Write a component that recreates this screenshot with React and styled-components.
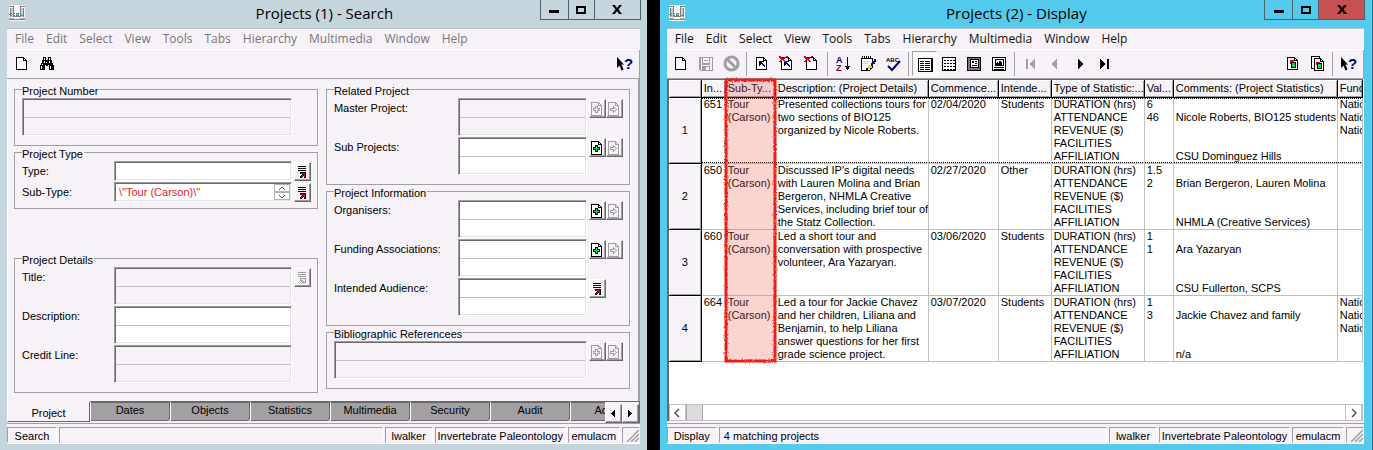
import React from 'react';
import styled, { createGlobalStyle, css } from 'styled-components';

const FACE = '#f7f2f7';
const LINE = '#a09fa1';
const DARK = '#696969';
const UI_FONT = '"Liberation Sans", Arial, sans-serif';
const CHROME_FONT = '"Open Sans", "Noto Sans", sans-serif';

const GlobalStyle = createGlobalStyle`
  * { box-sizing: border-box; }
  body { margin: 0; background: #000; }
  button, input, textarea { font: inherit; color: inherit; margin: 0; border-radius: 0; }
`;

/* ---------- window frame ---------- */

const Desktop = styled.div`
  display: flex;
  gap: 13px;
  min-height: 100vh;
  background: #000;
  color: #000;
  font: 11px/13px ${UI_FONT};
`;

const WindowFrame = styled.section`
  flex: ${p => p.$grow} 1 0;
  min-width: 0;
  display: flex;
  flex-direction: column;
  padding: 0 ${p => (p.$active ? 8 : 7)}px 6px 7px;
  background: ${p => (p.$active ? '#54cbec' : '#c5d5dc')};
  border-right: ${p => (p.$active ? '1px solid #2d6d80' : '0')};
`;

const TitleBar = styled.header`
  display: grid;
  grid-template-columns: 1fr auto 1fr;
  height: 28px;
  padding-left: 2px;
`;

const AppIcon = styled.span`
  padding-top: 5px;
  svg { display: block; }
`;

const Title = styled.h1`
  margin: 0;
  font: 400 15px/27px ${CHROME_FONT};
`;

const WindowButtons = styled.div`
  justify-self: end;
  display: flex;
  height: 20px;
  margin-right: -1px;
`;

const WindowButton = styled.button`
  display: flex;
  align-items: center;
  justify-content: center;
  width: ${p => p.$width}px;
  height: 20px;
  padding: 0;
  border: 1px solid #4e6068;
  border-top: 0;
  & + & { border-left: 0; }
  background: ${p => (p.$danger ? '#c75050' : 'transparent')};
`;

const Client = styled.div`
  flex: 1;
  display: flex;
  flex-direction: column;
  min-width: 0;
  background: ${FACE};
  border-top: 1px solid #b4c3cc;
`;

const MenuBar = styled.nav`
  display: flex;
  gap: 12px;
  height: 21px;
  padding-left: 8px;
  border-bottom: 1px solid #fff;
  font: 12px/20px ${CHROME_FONT};
`;

const MenuItem = styled.a`
  color: ${p => (p.$active ? '#111' : '#77747a')};
  text-decoration: none;
`;

const ToolBar = styled.div`
  display: flex;
  align-items: center;
  height: 29px;
  padding: 0 2px 1px;
  border-bottom: 1px solid ${LINE};
  border-right: 1px solid ${LINE};
`;

const ToolButton = styled.button`
  display: flex;
  align-items: center;
  justify-content: center;
  width: 25px;
  height: 25px;
  padding: 0;
  border: 1px solid transparent;
  background: none;
  ${p => p.$pressed && css`
    border-color: ${LINE} #fff #fff ${LINE};
    background: #fcfafc;
    padding: 2px 0 0 2px;
  `}
`;

const ToolSeparator = styled.span`
  width: 6px;
  height: 24px;
  background: linear-gradient(${LINE}, ${LINE}) 2px 0 / 1px 100% no-repeat;
`;

const Spacer = styled.span`
  flex: 1;
`;

/* ---------- form ---------- */

const FormBody = styled.main`
  flex: 1;
  display: flex;
  gap: 8px;
  padding: 4px 8px 8px 6px;
  border-left: 1px solid #fff;
  border-right: 2px solid ${LINE};
`;

const FormColumn = styled.div`
  flex: 1 1 0;
  min-width: 0;
  display: flex;
  flex-direction: column;
  justify-content: ${p => (p.$spread ? 'space-between' : 'flex-start')};
`;

const Group = styled.fieldset`
  min-width: 0;
  margin: 0;
  padding: 2px 6px ${p => (p.$tight ? 6 : 9)}px 7px;
  border: 1px solid ${LINE};
  box-shadow: 1px 0 #fff;
  display: grid;
  grid-template-columns: minmax(0, 1fr);
  row-gap: 1px;
`;

const Legend = styled.legend`
  height: 13px;
  padding: 2px 1px 0 0;
  line-height: 12px;
`;

const FieldRow = styled.div`
  display: flex;
  align-items: flex-start;
`;

const FieldLabel = styled.label`
  flex: none;
  width: ${p => p.$width}px;
  padding-top: 4px;
`;

const sunken = css`
  display: block;
  flex: 1;
  min-width: 0;
  padding: 3px 4px;
  border: 1px solid;
  border-color: ${LINE} #fff #fff ${LINE};
  box-shadow: inset 1px 1px ${DARK}, inset -1px -1px #e3e3e3;
  outline: 0;
  background-color: ${p => (p.disabled ? FACE : '#fff')};
`;

const LineInput = styled.input`
  ${sunken}
  height: 20px;
  color: #f0142c;
`;

const RuledText = styled.textarea`
  ${sunken}
  height: 38px;
  resize: none;
  overflow: hidden;
  line-height: 18px;
  background-image: linear-gradient(#c3c0c3, #c3c0c3);
  background-size: 100% 1px;
  background-position: 0 18px;
  background-repeat: no-repeat;
`;

const SpinnerWrap = styled.span`
  flex: 1;
  min-width: 0;
  display: grid;
  grid-template-columns: 1fr 16px 2px;
  align-items: center;
  > input { grid-area: 1 / 1 / 2 / 4; }
  > span { grid-area: 1 / 2 / 2 / 3; z-index: 1; }
`;

const Spinner = styled.span`
  display: grid;
  height: 16px;
`;

const SpinButton = styled.button`
  display: flex;
  align-items: center;
  justify-content: center;
  height: 8px;
  padding: 0;
  border: 1px solid #b5b3b5;
  background: #fff;
`;

const ButtonSlot = styled.span`
  flex: none;
  display: flex;
  width: ${p => p.$width}px;
  padding: 1px 0 0 2px;
`;

const RaisedButton = styled.button`
  display: flex;
  align-items: center;
  justify-content: center;
  width: 17px;
  height: 19px;
  padding: 0;
  border: 1px solid;
  border-color: #fff ${DARK} ${DARK} #fff;
  box-shadow: inset -1px -1px ${LINE};
  background: ${FACE};
`;

/* ---------- tabs ---------- */

const TabStrip = styled.div`
  display: flex;
  height: 22px;
  border-right: 1px solid ${DARK};
`;

const TabList = styled.div`
  flex: 1;
  min-width: 0;
  display: flex;
  overflow: hidden;
`;

const Tab = styled.button`
  flex: none;
  width: 80px;
  height: 20px;
  padding: 0 0 3px;
  border: 1px solid;
  border-color: ${DARK} ${DARK} ${DARK} #fff;
  border-top-width: 2px;
  border-bottom-right-radius: 3px;
  background: #a3a0a4;
  ${p => p.$active && css`
    width: 83px;
    height: 21px;
    padding: 2px 0 0;
    background: ${FACE};
    border-color: ${FACE} ${DARK} ${DARK} #fff;
    border-radius: 0;
  `}
`;

const TabArrows = styled.div`
  display: flex;
  height: 20px;
  padding-top: 2px;
  border-top: 1px solid ${DARK};
`;

/* ---------- status bar ---------- */

const StatusBar = styled.footer`
  display: flex;
  gap: 2px;
  height: 21px;
  padding-top: 3px;
  border-top: 1px solid ${LINE};
  border-bottom: 1px solid #fff;
`;

const StatusCell = styled.span`
  flex: ${p => (p.$width ? `0 0 ${p.$width}px` : '1')};
  overflow: hidden;
  text-align: ${p => (p.$width ? 'center' : 'left')};
  padding: 2px 0 0 ${p => (p.$width ? 0 : 4)}px;
  border: 1px solid;
  border-color: ${LINE} #fff transparent ${LINE};
  white-space: nowrap;
`;

const GripCell = styled.span`
  flex: 0 0 18px;
  display: flex;
  justify-content: flex-end;
  align-items: flex-end;
  border: 1px solid;
  border-color: ${LINE} transparent transparent ${LINE};
`;

/* ---------- grid ---------- */

const GridPane = styled.main`
  flex: 1;
  display: flex;
  flex-direction: column;
  margin: 0 1px 2px 0;
  border: 1px solid ${DARK};
  border-width: 1px 0 0 2px;
  background: #fff;
`;

const TableWrap = styled.div`
  position: relative;
  flex: 1;
  min-height: 324px;
`;

const Table = styled.table`
  width: 100%;
  table-layout: fixed;
  border-collapse: separate;
  border-spacing: 0;
`;

const dots = 'repeating-linear-gradient(90deg, #000 0 1px, transparent 1px 2px)';

const ColumnHead = styled.th`
  height: 18px;
  padding: 2px 0 2px 2px;
  overflow: hidden;
  white-space: nowrap;
  text-align: left;
  font-weight: 400;
  background: ${FACE};
  border-right: 1px solid #000;
  border-bottom: 1px solid #000;
  box-shadow: inset 1px 1px #fff, inset -1px -1px ${LINE};
`;

const RowHead = styled.th`
  height: 66px;
  padding: 0;
  font-weight: 400;
  background: ${FACE};
  border-right: 1px solid #000;
  border-bottom: 1px solid #000;
  box-shadow: inset 1px 1px #fff, inset -1px -1px ${LINE};
`;

const Cell = styled.td`
  height: 66px;
  padding: 0 0 0 2px;
  vertical-align: top;
  white-space: pre;
  overflow: hidden;
  border-right: 1px solid #c0c0c0;
  border-bottom: 1px solid #c0c0c0;
  background: ${p => (p.$focus ? `${dots} 0 100% / 100% 1px no-repeat, ${dots} 0 0 / 100% 1px no-repeat` : 'none')};
`;

const Highlight = styled.svg`
  position: absolute;
  left: 53px;
  top: -4px;
  width: 56px;
  height: 290px;
  pointer-events: none;
`;

const ScrollBar = styled.div`
  display: flex;
  height: 17px;
  border: 1px solid #c0c0c0;
  border-left: 0;
`;

const ScrollButton = styled.button`
  display: flex;
  align-items: center;
  justify-content: center;
  width: 17px;
  padding: 0;
  border: 0 solid #c0c0c0;
  border-width: 0 1px;
  background: #fff;
`;

const ScrollThumb = styled.span`
  width: 17px;
  border: 1px solid #a8a8a8;
  border-width: 0 1px;
  background: #dcdcdc;
`;

/* ---------- icons ---------- */

const Icon = ({ w = 16, h = 16, children }) => (
  <svg width={w} height={h} viewBox={`0 0 ${w} ${h}`} shapeRendering="crispEdges" fill="none" aria-hidden="true">
    {children}
  </svg>
);

const LogoIcon = () => (
  <Icon>
    <path d="M0 0h16v16H0z" fill="#f6f7f7" />
    <path d="M0 1h5v1H0zM11 1h5v1h-5zM1 3h1v9H1zM4 2h1v6H4zM11 2h1v6h-1zM14 3h1v9h-1zM0 14h16v1H0zM4 11h8v1H4z" fill="#7d8383" />
    <path d="M2 3h2v9H2zM12 3h2v9h-2z" fill="#c9cdcd" />
    <path d="M0 13h5v1H0zM11 13h5v1h-5z" fill="#a9afaf" />
    <path d="M1 8h2v1H1v1h2v1H1v-1H0V9h1zM4 8h2v1H5v1h1v1H4zM7 8h3v3H7zM11 8h1v2h2V8h1v3h-4z" fill="#5d8a84" />
    <path d="M8 9h1v1H8z" fill="#fff" />
  </Icon>
);

const MinIcon = () => <Icon w={12} h={12}><path d="M1 6h10v3H1z" fill="#000" /></Icon>;
const MaxIcon = () => <Icon w={10} h={10}><path d="M1 2h8v6H1z" stroke="#000" strokeWidth="2" /></Icon>;
const CloseIcon = () => (
  <svg width="10" height="9" viewBox="0 0 10 9" aria-hidden="true">
    <path d="M0 0h3l2 3 2-3h3L6.500 4.500 10 9H7L5 6 3 9H0l3.500-4.500z" fill="#000" />
  </svg>
);

const page = 'M2.500 1.500h7l3 3v9h-10z';
const fold = 'M9.500 1.500v3h3';

const NewIcon = () => <Icon><path d={page} fill="#fff" stroke="#000" /><path d={fold} stroke="#000" /></Icon>;
const FindIcon = () => (
  <Icon>
    <path d="M4 1h3v3h2V1h3v3h1v3h1v2h1v5h-5V9H9v1H7V9H6v5H1V9h1V7h1V4h1z" fill="#000" />
    <path d="M5 2h1v2H5zM10 2h1v2h-1zM3 8h1v1H3zM2 10h1v3H2zM5 5h1v2H5zM11 10h1v3h-1zM10 5h1v2h-1zM7 6h1v1H7z" fill="#fff" />
  </Icon>
);
const SaveIcon = () => (
  <Icon>
    <path d="M1.500 1.500h13v13h-12l-1-1zM4.500 1.500v6h7v-6M4.500 14v-4h7v4M6 4.500h4" stroke="#a19ea2" />
    <path d="M2 2h1v12H2zM4 8h8v1H4zM5 11h3v3H5z" fill="#a19ea2" />
  </Icon>
);
const StopIcon = () => (
  <svg width="17" height="17" viewBox="0 0 17 17" fill="none" aria-hidden="true">
    <circle cx="8.500" cy="8.500" r="6.500" stroke="#a19ea2" strokeWidth="3" />
    <path d="M4 4l9 9" stroke="#a19ea2" strokeWidth="3" />
  </svg>
);
const NavArrow = () => <path d="M5 5h5v1H8v1h1v1h1v1h1v2h-1v-1H9V9H8V8H7v1H6v1H5z" fill="#00007c" />;
const RedCross = () => <path d="M0 0h2v1h1v1h2V1h2V0h2v1H7v1H6v1H5v1h1v1h1v1H5V5H4V4H3v1H2v1H0V5h1V4h1V3H1V2H0z" fill="#e00018" />;
const PageNavIcon = () => <Icon><path d={page} fill="#fff" stroke="#000" /><path d={fold} stroke="#000" /><NavArrow /></Icon>;
const PageNavClearIcon = () => <Icon><path d={page} fill="#fff" stroke="#000" /><path d={fold} stroke="#000" /><NavArrow /><RedCross /></Icon>;
const PageClearIcon = () => <Icon><path d={page} fill="#fff" stroke="#000" /><path d={fold} stroke="#000" /><RedCross /></Icon>;
const SortIcon = () => (
  <svg width="16" height="16" viewBox="0 0 16 16" aria-hidden="true">
    <text x="1" y="7" fontFamily="Liberation Sans" fontWeight="700" fontSize="9" fill="#00007c">A</text>
    <text x="1" y="15" fontFamily="Liberation Sans" fontWeight="700" fontSize="9" fill="#8c0020">Z</text>
    <path d="M12 1h1v9h2v1h-1v2h-1v1h-1v-1h-1v-2h-1v-1h2z" fill="#000" />
  </svg>
);
const NotesIcon = () => (
  <Icon>
    <path d="M1.500 2.500h11v9l-3 3h-8z" fill="#fff" stroke="#000" />
    <path d="M2 0h1v3H2zM4 0h1v3H4zM6 0h1v3H6zM8 0h1v3H8zM10 0h1v3h-1z" fill="#000" />
    <path d="M14 3h2v3h-1v2h-2v2h-2V7h1V5h2z" fill="#101080" />
    <path d="M9 9h2v1h1v2h-2v1H7v-2h1v-1h1z" fill="#f0d030" />
    <path d="M6 12h2v2H6zM10 12h2v1h-2z" fill="#000" />
    <path d="M3 5h6v1H3zM3 7h5v1H3z" fill="#ccc" />
  </Icon>
);
const SpellIcon = () => (
  <svg width="17" height="16" viewBox="0 0 17 16" fill="none" aria-hidden="true">
    <text x="1" y="6" fontFamily="Liberation Sans" fontWeight="700" fontSize="6" fill="#000">ABC</text>
    <path d="M3 10l4 4 8-9" stroke="#00007c" strokeWidth="2" />
  </svg>
);
const ListViewIcon = () => (
  <Icon w={17}>
    <path d="M1.500 1.500h14v13h-14z" fill="#fff" stroke="#000" />
    <path d="M14 2h2v13H2v-1h12z" fill="#000" />
    <path d="M3 4.500h4M3 6.500h4M3 8.500h4M3 10.500h4M3 12.500h4M8 4.500h5M8 6.500h5M8 8.500h5M8 10.500h5M8 12.500h5" stroke="#000" />
  </Icon>
);
const GridViewIcon = () => (
  <Icon w={16}>
    <path d="M1.500 1.500h13v13h-13z" fill="#fff" stroke="#000" />
    <path d="M3 4h11M3 7h11M3 10h11M3 13h11" stroke="#000" strokeWidth="2" strokeDasharray="2 1" />
    <path d="M3 3h11v1H3zM3 6h11v1H3zM3 9h11v1H3zM3 12h11v1H3z" fill="#fff" />
    <path d="M3 4h2v1H3zM6 4h2v1H6zM9 4h2v1H9zM12 4h2v1h-2z" fill="#000" />
  </Icon>
);
const DetailViewIcon = () => (
  <Icon w={16}>
    <path d="M1.500 1.500h13v13h-13z" fill="#77767a" stroke="#000" />
    <path d="M4.500 3.500h8v8h-8z" fill="#fff" stroke="#000" />
    <path d="M6 5h2v2H6zM9 5h2v1H9zM9 7h2v1H9zM6 9h5v1H6z" fill="#000" />
  </Icon>
);
const ImageViewIcon = () => (
  <Icon w={16}>
    <path d="M1.500 1.500h13v13h-13z" fill="#fff" stroke="#000" />
    <path d="M4.500 3.500h8v6h-8z" fill="#fff" stroke="#000" />
    <path d="M5 7h1V6h1v1h1V5h2v1h1v3H5zM3 11h10v1H3zM3 13h10v1H3zM14 1h1v14h-1z" fill="#000" />
  </Icon>
);
const MoveIcon = ({ dir, bar, off }) => (
  <Icon w={12} h={12}>
    <g fill={off ? '#a19ea2' : '#000'} transform={dir < 0 ? 'matrix(-1 0 0 1 12 0)' : undefined}>
      <path d={bar ? 'M1 1h1v1h1v1h1v1h1v1h1v2H5v1H4v1H3v1H2v1H1z' : 'M4 1h1v1h1v1h1v1h1v1h1v2H8v1H7v1H6v1H5v1H4z'} />
      {bar && <path d="M8 1h2v10H8z" />}
    </g>
  </Icon>
);
const ReportIcon = () => (
  <Icon>
    <path d={page} fill="#fff" stroke="#000" /><path d={fold} stroke="#000" />
    <path d="M5 4h4v4H5z" fill="#e00018" /><path d="M6.500 6.500h4v5h-4z" fill="#00e048" stroke="#000" />
  </Icon>
);
const ReportsIcon = () => (
  <Icon>
    <path d="M1.500 .5h8v12h-8z" fill="#fff" stroke="#000" />
    <path d="M4.500 2.500h6l3 3v9h-9z" fill="#fff" stroke="#000" /><path d="M10.500 2.500v3h3" stroke="#000" />
    <path d="M6 6h4v3H6z" fill="#e00018" /><path d="M7.500 7.500h4v5h-4z" fill="#00e048" stroke="#000" />
  </Icon>
);
const HelpIcon = () => (
  <svg width="17" height="16" viewBox="0 0 17 16" aria-hidden="true">
    <path d="M1 1l7 7.500H5.500l2 5-2 1-2-5L1 12z" fill="#000" />
    <text x="8" y="13" fontFamily="Liberation Sans" fontWeight="700" fontSize="15" fill="#00007c">?</text>
  </svg>
);
const LookupIcon = ({ off }) => (
  <Icon w={11} h={13}>
    <path d="M1 1.500h8M1 3.500h8M1 5.500h8" stroke={off ? '#a19ea2' : '#000'} />
    {off
      ? <path d="M3.500 7.500h5v4h-2v-1l-2 2-1-1 2-2h-2z" stroke="#a19ea2" />
      : <><path d="M3 7h6v6H7v-2H6v1H5v1H3v-2h1v-1h1V9H3z" fill="#000" /><path d="M4 8h4v4H7v-2H6v1H5v1H4v-1h1v-1h1V9H4z" fill="#e00018" /></>}
  </Icon>
);
const AddIcon = ({ off }) => (
  <Icon w={12} h={14}>
    <path d="M.5 .5h7l3 3v10H.5z" fill={off ? 'none' : '#fff'} stroke={off ? '#a19ea2' : '#000'} />
    <path d="M7.500 .5v3h3" stroke={off ? '#a19ea2' : '#000'} />
    <path d="M4.500 4.500h2v2h2v2h-2v2h-2v-2h-2v-2h2z" fill={off ? 'none' : '#00e048'} stroke={off ? '#a19ea2' : '#000'} />
    {!off && <path d="M5 5h1v2h2v1H6v2H5V8H3V7h2z" fill="#00f050" />}
  </Icon>
);
const GoIcon = () => (
  <Icon w={12} h={14}>
    <path d="M.5 .5h7l3 3v10H.5zM7.500 .5v3h3" stroke="#a19ea2" />
    <path d="M2.500 6.500h3v-2l3 3-3 3v-2h-3z" stroke="#a19ea2" />
  </Icon>
);
const Triangle = ({ dir }) => (
  <Icon w={6} h={9}>
    <path d={dir < 0 ? 'M4 1h1v7H4V7H3V6H2V5H1V4h1V3h1V2h1z' : 'M1 1h1v1h1v1h1v1h1v1H4v1H3v1H2v1H1z'} fill="#000" />
  </Icon>
);
const Chevron = ({ d }) => (
  <svg width="8" height="10" viewBox="0 0 8 10" fill="none" aria-hidden="true"><path d={d} stroke="#555" strokeWidth="1.500" /></svg>
);
const SpinMark = ({ up }) => (
  <svg width="8" height="5" viewBox="0 0 8 5" fill="none" aria-hidden="true">
    <path d={up ? 'M1 4l3-3 3 3' : 'M1 1l3 3 3-3'} stroke="#555" />
  </svg>
);
const Grip = () => (
  <svg width="13" height="13" viewBox="0 0 13 13" aria-hidden="true">
    <path d="M1 13L13 1M5 13l8-8M9 13l4-4" stroke={LINE} strokeWidth="1.500" />
  </svg>
);

/* ---------- composed parts ---------- */

const MENUS = ['File', 'Edit', 'Select', 'View', 'Tools', 'Tabs', 'Hierarchy', 'Multimedia', 'Window', 'Help'];

function Chrome({ title, active, grow, children }) {
  return (
    <WindowFrame $grow={grow} $active={active}>
      <TitleBar>
        <AppIcon><LogoIcon /></AppIcon>
        <Title>{title}</Title>
        <WindowButtons>
          <WindowButton $width={29} aria-label="Minimize"><MinIcon /></WindowButton>
          <WindowButton $width={26} aria-label="Maximize"><MaxIcon /></WindowButton>
          <WindowButton $width={46} $danger={active} aria-label="Close"><CloseIcon /></WindowButton>
        </WindowButtons>
      </TitleBar>
      <Client>
        <MenuBar>
          {MENUS.map(m => <MenuItem key={m} href="#" $active={active}>{m}</MenuItem>)}
        </MenuBar>
        {children}
      </Client>
    </WindowFrame>
  );
}

function Status({ mode, message }) {
  return (
    <StatusBar>
      <StatusCell $width={50}>{mode}</StatusCell>
      <StatusCell>{message}</StatusCell>
      <StatusCell $width={48}>lwalker</StatusCell>
      <StatusCell $width={131}>Invertebrate Paleontology</StatusCell>
      <StatusCell $width={52}>emulacm</StatusCell>
      <GripCell><Grip /></GripCell>
    </StatusBar>
  );
}

const Lookup = ({ off }) => (
  <RaisedButton type="button" disabled={off} aria-label="Lookup list"><LookupIcon off={off} /></RaisedButton>
);
const Attach = ({ off }) => (
  <>
    <RaisedButton type="button" disabled={off} aria-label="Attach"><AddIcon off={off} /></RaisedButton>
    <RaisedButton type="button" disabled aria-label="View attachments"><GoIcon /></RaisedButton>
  </>
);

function TextField({ id, label, name, labelWidth, slot, off, children }) {
  return (
    <FieldRow>
      {label && <FieldLabel htmlFor={id} $width={labelWidth}>{label}</FieldLabel>}
      <RuledText id={id} aria-label={name} rows={2} disabled={off} />
      <ButtonSlot $width={slot}>{children}</ButtonSlot>
    </FieldRow>
  );
}

function SearchForm() {
  return (
    <FormBody>
      <FormColumn $spread>
        <div>
          <Group>
            <Legend>Project Number</Legend>
            <TextField id="number" name="Project Number" slot={19} off />
          </Group>
          <Group $tight>
            <Legend>Project Type</Legend>
            <FieldRow>
              <FieldLabel htmlFor="type" $width={92}>Type:</FieldLabel>
              <LineInput id="type" />
              <ButtonSlot $width={19}><Lookup /></ButtonSlot>
            </FieldRow>
            <FieldRow>
              <FieldLabel htmlFor="subtype" $width={92}>Sub-Type:</FieldLabel>
              <SpinnerWrap>
                <LineInput id="subtype" defaultValue={'\\"Tour (Carson)\\"'} />
                <Spinner>
                  <SpinButton type="button" aria-label="Previous value"><SpinMark up /></SpinButton>
                  <SpinButton type="button" aria-label="Next value"><SpinMark /></SpinButton>
                </Spinner>
              </SpinnerWrap>
              <ButtonSlot $width={19}><Lookup /></ButtonSlot>
            </FieldRow>
          </Group>
        </div>
        <Group>
          <Legend>Project Details</Legend>
          <TextField id="title" label="Title:" labelWidth={92} slot={19} off><Lookup off /></TextField>
          <TextField id="description" label="Description:" labelWidth={92} slot={19} />
          <TextField id="credit" label="Credit Line:" labelWidth={92} slot={19} off />
        </Group>
      </FormColumn>
      <FormColumn>
        <Group>
          <Legend>Related Project</Legend>
          <TextField id="master" label="Master Project:" labelWidth={124} slot={36} off><Attach off /></TextField>
          <TextField id="sub" label="Sub Projects:" labelWidth={124} slot={36}><Attach /></TextField>
        </Group>
        <Group>
          <Legend>Project Information</Legend>
          <TextField id="organisers" label="Organisers:" labelWidth={124} slot={36}><Attach /></TextField>
          <TextField id="funding" label="Funding Associations:" labelWidth={124} slot={36}><Attach /></TextField>
          <TextField id="audience" label="Intended Audience:" labelWidth={124} slot={36}><Lookup /></TextField>
        </Group>
        <Group>
          <Legend>Bibliographic Referencees</Legend>
          <TextField id="references" name="Bibliographic Referencees" slot={36} off><Attach off /></TextField>
        </Group>
      </FormColumn>
    </FormBody>
  );
}

const TABS = ['Project', 'Dates', 'Objects', 'Statistics', 'Multimedia', 'Security', 'Audit', 'Admin'];

const TOOLS = [
  ['New', NewIcon], ['Save', SaveIcon], ['Cancel', StopIcon], null,
  ['View attachment', PageNavIcon], ['Discard record', PageNavClearIcon], ['Clear record', PageClearIcon], null,
  ['Sort', SortIcon], ['Notes', NotesIcon], ['Spelling', SpellIcon], null,
  ['List view', ListViewIcon, true], ['Contact sheet', GridViewIcon], ['Details view', DetailViewIcon], ['Page view', ImageViewIcon], null,
  ['First', () => <MoveIcon dir={-1} bar off />], ['Previous', () => <MoveIcon dir={-1} off />],
  ['Next', () => <MoveIcon dir={1} />], ['Last', () => <MoveIcon dir={1} bar />],
];

const COLUMNS = [
  ['', 33], ['In...', 24], ['Sub-Ty...', 50], ['Description: (Project Details)', 153],
  ['Commence...', 70], ['Intende...', 53], ['Type of Statistic:...', 93],
  ['Val...', 29], ['Comments: (Project Statistics)', 164], ['Fund', null],
];

const KINDS = 'DURATION (hrs)\nATTENDANCE\nREVENUE ($)\nFACILITIES\nAFFILIATION';
const FUND = 'Natio\nNatio\nNatio';

const ROWS = [
  ['651', 'Tour\n(Carson)', 'Presented collections tours for\ntwo sections of BIO125\norganized by Nicole Roberts.', '02/04/2020', 'Students', KINDS, '6\n46', '\nNicole Roberts, BIO125 students\n\n\nCSU Dominguez Hills', FUND],
  ['650', 'Tour\n(Carson)', "Discussed IP's digital needs\nwith Lauren Molina and Brian\nBergeron, NHMLA Creative\nServices, including brief tour of\nthe Statz Collection.", '02/27/2020', 'Other', KINDS, '1.5\n2', '\nBrian Bergeron, Lauren Molina\n\n\nNHMLA (Creative Services)', ''],
  ['660', 'Tour\n(Carson)', 'Led a short tour and\nconversation with prospective\nvolunteer, Ara Yazaryan.', '03/06/2020', 'Students', KINDS, '1\n1', '\nAra Yazaryan\n\n\nCSU Fullerton, SCPS', ''],
  ['664', 'Tour\n(Carson)', 'Led a tour for Jackie Chavez\nand her children, Liliana and\nBenjamin, to help Liliana\nanswer questions for her first\ngrade science project.', '03/07/2020', 'Students', KINDS, '1\n3', '\nJackie Chavez and family\n\n\nn/a', FUND],
];

function ResultGrid() {
  return (
    <GridPane>
      <TableWrap>
        <Table>
          <colgroup>
            {COLUMNS.map(([name, width]) => <col key={name} width={width || undefined} />)}
          </colgroup>
          <thead>
            <tr>{COLUMNS.map(([name]) => <ColumnHead key={name} scope="col">{name}</ColumnHead>)}</tr>
          </thead>
          <tbody>
            {ROWS.map((row, r) => (
              <tr key={row[0]}>
                <RowHead scope="row">{r + 1}</RowHead>
                {row.map((text, c) => <Cell key={c} $focus={r === 0}>{text}</Cell>)}
              </tr>
            ))}
          </tbody>
        </Table>
        <Highlight viewBox="0 0 56 290" aria-hidden="true">
          <filter id="rough" x="-10%" y="-2%" width="120%" height="104%">
            <feTurbulence type="fractalNoise" baseFrequency="0.6" numOctaves="2" seed="4" />
            <feDisplacementMap in="SourceGraphic" scale="3" />
          </filter>
          <rect x="4" y="4" width="49" height="281" fill="#ee5a48" fillOpacity=".26" />
          <rect x="4" y="4" width="49" height="281" fill="none" stroke="#ec1c16" strokeWidth="3" filter="url(#rough)" />
        </Highlight>
      </TableWrap>
      <ScrollBar>
        <ScrollButton type="button" aria-label="Scroll left"><Chevron d="M6 1L2 5l4 4" /></ScrollButton>
        <ScrollThumb />
        <Spacer />
        <ScrollButton type="button" aria-label="Scroll right"><Chevron d="M2 1l4 4-4 4" /></ScrollButton>
      </ScrollBar>
    </GridPane>
  );
}

export default function App() {
  return (
    <Desktop>
      <GlobalStyle />
      <Chrome title="Projects (1) - Search" grow={647}>
        <ToolBar>
          <ToolButton aria-label="New"><NewIcon /></ToolButton>
          <ToolButton aria-label="Search"><FindIcon /></ToolButton>
          <Spacer />
          <ToolButton aria-label="Help"><HelpIcon /></ToolButton>
        </ToolBar>
        <SearchForm />
        <TabStrip>
          <TabList role="tablist">
            {TABS.map((t, i) => <Tab key={t} role="tab" aria-selected={i === 0} $active={i === 0}>{t}</Tab>)}
          </TabList>
          <TabArrows>
            <RaisedButton aria-label="Scroll tabs left"><Triangle dir={-1} /></RaisedButton>
            <RaisedButton aria-label="Scroll tabs right"><Triangle dir={1} /></RaisedButton>
          </TabArrows>
        </TabStrip>
        <Status mode="Search" />
      </Chrome>
      <Chrome title="Projects (2) - Display" grow={713} active>
        <ToolBar>
          {TOOLS.map((tool, i) => {
            if (!tool) return <ToolSeparator key={i} />;
            const [name, Glyph, pressed] = tool;
            return <ToolButton key={i} aria-label={name} $pressed={pressed}><Glyph /></ToolButton>;
          })}
          <Spacer />
          <ToolButton aria-label="Report"><ReportIcon /></ToolButton>
          <ToolButton aria-label="Reports"><ReportsIcon /></ToolButton>
          <ToolSeparator />
          <ToolButton aria-label="Help"><HelpIcon /></ToolButton>
        </ToolBar>
        <ResultGrid />
        <Status mode="Display" message="4 matching projects" />
      </Chrome>
    </Desktop>
  );
}
